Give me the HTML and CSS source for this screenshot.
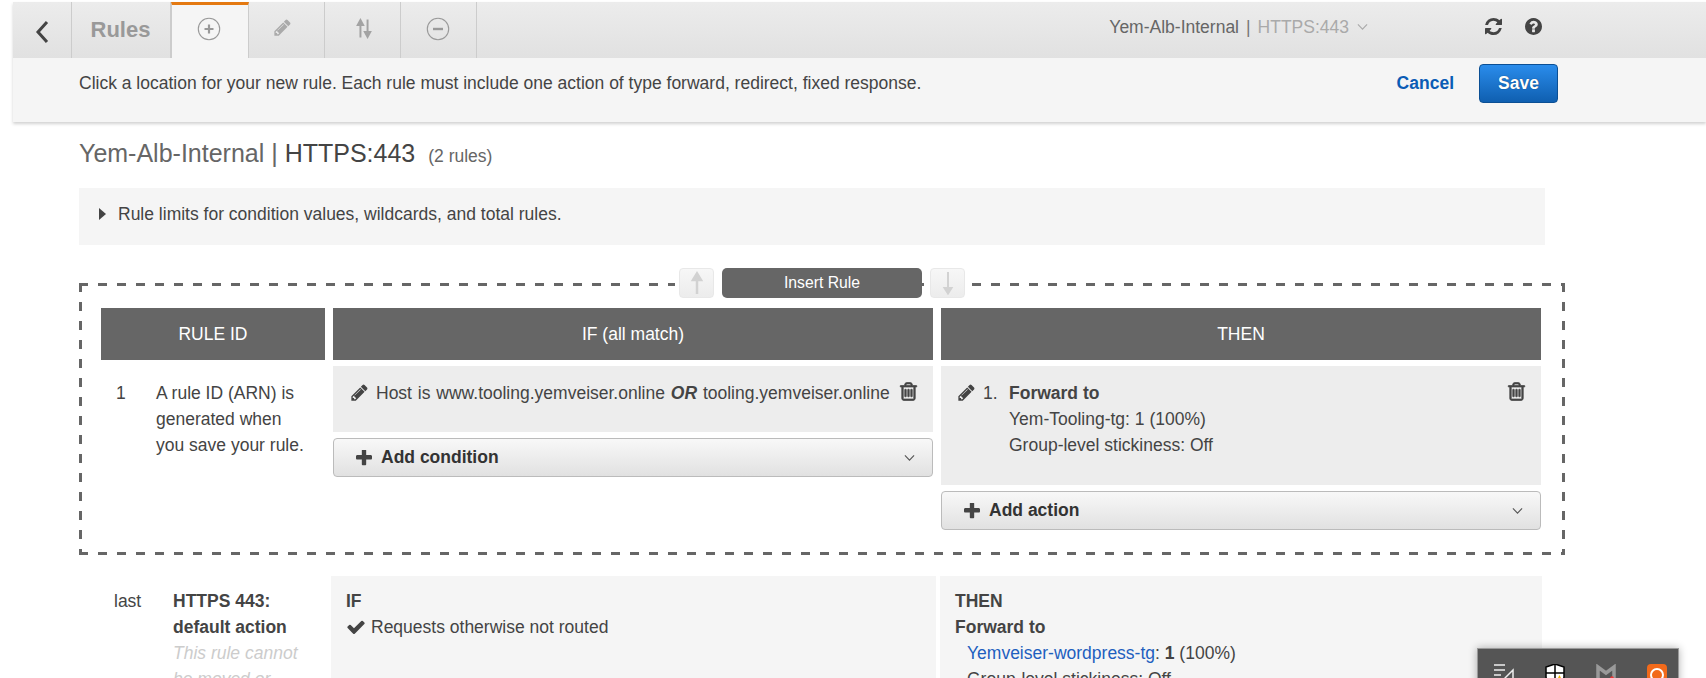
FILE: index.html
```html
<!DOCTYPE html>
<html lang="en">
<head>
<meta charset="utf-8">
<title>Rules</title>
<link rel="stylesheet" href="styles.css">
</head>
<body>
<svg class="defs" width="0" height="0" aria-hidden="true">
  <symbol id="i-pencil" viewBox="0 0 1792 1792"><path d="M491 1536l91-91-235-235-91 91v107h128v128h107zm523-928q0-22-22-22-10 0-17 7l-542 542q-7 7-7 17 0 22 22 22 10 0 17-7l542-542q7-7 7-17zm-54-192l416 416-832 832h-416v-416zm683 96q0 53-37 90l-166 166-416-416 166-165q36-38 90-38 53 0 91 38l235 234q37 39 37 91z"/></symbol>
  <symbol id="i-trash" viewBox="0 0 1792 1792"><path d="M704 736v576q0 14-9 23t-23 9h-64q-14 0-23-9t-9-23v-576q0-14 9-23t23-9h64q14 0 23 9t9 23zm256 0v576q0 14-9 23t-23 9h-64q-14 0-23-9t-9-23v-576q0-14 9-23t23-9h64q14 0 23 9t9 23zm256 0v576q0 14-9 23t-23 9h-64q-14 0-23-9t-9-23v-576q0-14 9-23t23-9h64q14 0 23 9t9 23zm128 724v-948h-896v948q0 22 7 40.5t14.5 27 10.5 8.5h832q3 0 10.5-8.5t14.5-27 7-40.5zm-672-1076h448l-48-117q-7-9-17-11h-317q-10 2-17 11zm928 32v64q0 14-9 23t-23 9h-96v948q0 83-47 143.5t-113 60.5h-832q-66 0-113-58.5t-47-141.5v-952h-96q-14 0-23-9t-9-23v-64q0-14 9-23t23-9h309l70-167q15-37 54-63t79-26h320q40 0 79 26t54 63l70 167h309q14 0 23 9t9 23z"/></symbol>
  <symbol id="i-plus" viewBox="192 192 1408 1408"><path d="M1600 736v192q0 40-28 68t-68 28h-416v416q0 40-28 68t-68 28h-192q-40 0-68-28t-28-68v-416h-416q-40 0-68-28t-28-68v-192q0-40 28-68t68-28h416v-416q0-40 28-68t68-28h192q40 0 68 28t28 68v416h416q40 0 68 28t28 68z"/></symbol>
  <symbol id="i-refresh" viewBox="128 128 1536 1536"><path d="M1639 1056q0 5-1 7-64 268-268 434.5t-478 166.5q-146 0-282.5-55t-243.5-157l-129 129q-19 19-45 19t-45-19-19-45v-448q0-26 19-45t45-19h448q26 0 45 19t19 45-19 45l-137 137q71 66 161 102t187 36q134 0 250-65t186-179q11-17 53-117 8-23 30-23h192q13 0 22.5 9.5t9.5 22.5zm25-800v448q0 26-19 45t-45 19h-448q-26 0-45-19t-19-45 19-45l138-138q-148-137-349-137-134 0-250 65t-186 179q-11 17-53 117-8 23-30 23h-199q-13 0-22.5-9.5t-9.5-22.5v-7q65-268 270-434.5t480-166.5q146 0 284 55.5t245 156.5l130-129q19-19 45-19t45 19 19 45z"/></symbol>
  <symbol id="i-help" viewBox="128 128 1536 1536"><path d="M1024 1376v-192q0-14-9-23t-23-9h-192q-14 0-23 9t-9 23v192q0 14 9 23t23 9h192q14 0 23-9t9-23zm256-672q0-88-55.5-163t-138.5-116-170-41q-243 0-371 213-15 24 8 42l132 100q7 6 19 6 16 0 25-12 53-68 86-92 34-24 86-24 48 0 85.5 26t37.5 59q0 38-20 61t-68 45q-63 28-115.5 86.5t-52.5 125.5v36q0 14 9 23t23 9h192q14 0 23-9t9-23q0-19 21.5-49.5t54.5-49.5q32-18 49-28.5t46-35 44.5-48 28-60.5 12.5-81zm384 192q0 209-103 385.5t-279.5 279.5-385.5 103-385.5-103-279.5-279.5-103-385.5 103-385.5 279.5-279.5 385.5-103 385.5 103 279.5 279.5 103 385.5z"/></symbol>
  <symbol id="i-check" viewBox="0 0 1792 1792"><path d="M1671 566q0 40-28 68l-724 724-136 136q-28 28-68 28t-68-28l-136-136-362-362q-28-28-28-68t28-68l136-136q28-28 68-28t68 28l294 295 656-657q28-28 68-28t68 28l136 136q28 28 28 68z"/></symbol>
  <symbol id="i-chev" viewBox="0 0 12 8"><path d="M1 1.200 6 6.400 11 1.200" fill="none" stroke="currentColor" stroke-width="1.200"/></symbol>
</svg>

<header class="console">
  <nav class="tabbar">
    <a class="tab tab-back">
      <svg class="back-icon" viewBox="0 0 14 24"><path d="M12 2 3 12l9 10" fill="none" stroke="currentColor" stroke-width="3"/></svg>
    </a>
    <a class="tab tab-title">Rules</a>
    <a class="tab tab-icon tab-active">
      <svg class="round-icon" viewBox="0 0 24 24"><circle cx="12" cy="12" r="10.700" fill="none" stroke="currentColor" stroke-width="1.100"/><path d="M12 7.500v9M7.500 12h9" stroke="currentColor" stroke-width="2.200"/></svg>
    </a>
    <a class="tab tab-icon">
      <svg class="edit-icon"><use href="#i-pencil"/></svg>
    </a>
    <a class="tab tab-icon">
      <svg class="sort-icon" viewBox="0 0 18 22"><path d="M5 21V6M2 7 5 1.500 8 7zM13 1v15M10 15 13 20.500 16 15z" stroke="currentColor" stroke-width="2.200" fill="currentColor"/></svg>
    </a>
    <a class="tab tab-icon tab-minus">
      <svg class="round-icon" viewBox="0 0 24 24"><circle cx="12" cy="12" r="10.700" fill="none" stroke="currentColor" stroke-width="1.100"/><path d="M7 12h10" stroke="currentColor" stroke-width="2.400"/></svg>
    </a>
    <div class="crumb">
      <span class="crumb-name">Yem-Alb-Internal</span>
      <span class="crumb-sep">|</span>
      <span class="crumb-port">HTTPS:443</span>
      <svg class="crumb-chev"><use href="#i-chev"/></svg>
    </div>
    <svg class="tool-icon"><use href="#i-refresh"/></svg>
    <svg class="tool-icon tool-help"><use href="#i-help"/></svg>
  </nav>
  <div class="notice">
    <p class="notice-text">Click a location for your new rule. Each rule must include one action of type forward, redirect, fixed response.</p>
    <a class="cancel">Cancel</a>
    <button class="save" type="button">Save</button>
  </div>
</header>

<main class="content">
  <h1 class="title"><span class="title-name">Yem-Alb-Internal |</span> HTTPS:443 <small class="title-count">(2 rules)</small></h1>

  <div class="limits"><span class="caret"></span>Rule limits for condition values, wildcards, and total rules.</div>

  <section class="new-rule">
    <div class="insert-bar">
      <button class="arrow" type="button"><svg viewBox="0 0 14 24"><path d="M7 23V7M3 9 7 2.500 11 9z" stroke="currentColor" stroke-width="2.500" fill="currentColor"/></svg></button>
      <button class="insert" type="button">Insert Rule</button>
      <button class="arrow" type="button"><svg viewBox="0 0 14 24"><path d="M7 1v16M3.500 17 7 22.500 10.500 17z" stroke="currentColor" stroke-width="2" fill="currentColor"/></svg></button>
    </div>
    <div class="rule-grid">
      <div class="col-head">RULE ID</div>
      <div class="col-head">IF (all match)</div>
      <div class="col-head">THEN</div>

      <div class="rule-id">
        <span class="rule-num">1</span>
        <span class="rule-note">A rule ID (ARN) is generated when you save your rule.</span>
      </div>

      <div class="rule-col">
        <div class="cond-card">
          <svg class="row-icon"><use href="#i-pencil"/></svg>
          <span class="cond-text">Host is www.tooling.yemveiser.online <b><i>OR</i></b> tooling.yemveiser.online</span>
          <svg class="trash"><use href="#i-trash"/></svg>
        </div>
        <button class="add-btn" type="button">
          <svg class="add-plus"><use href="#i-plus"/></svg>
          <span>Add condition</span>
          <svg class="add-chev"><use href="#i-chev"/></svg>
        </button>
      </div>

      <div class="rule-col">
        <div class="then-card">
          <svg class="row-icon"><use href="#i-pencil"/></svg>
          <span class="then-num">1.</span>
          <div class="then-body">
            <b>Forward to</b>
            <div>Yem-Tooling-tg: 1 (100%)</div>
            <div>Group-level stickiness: Off</div>
          </div>
          <svg class="trash"><use href="#i-trash"/></svg>
        </div>
        <button class="add-btn add-action" type="button">
          <svg class="add-plus"><use href="#i-plus"/></svg>
          <span>Add action</span>
          <svg class="add-chev"><use href="#i-chev"/></svg>
        </button>
      </div>
    </div>
  </section>

  <section class="default-rule">
    <div class="last-num">last</div>
    <div class="last-name">
      <b>HTTPS 443:<br>default action</b>
      <i class="last-hint">This rule cannot be moved or deleted</i>
    </div>
    <div class="last-card">
      <b>IF</b>
      <div class="last-cond"><svg class="check"><use href="#i-check"/></svg>Requests otherwise not routed</div>
    </div>
    <div class="last-card">
      <b>THEN</b>
      <div><b>Forward to</b></div>
      <div class="last-target"><a class="tg-link">Yemveiser-wordpress-tg</a>: <b>1</b> (100%)</div>
      <div class="last-target">Group-level stickiness: Off</div>
    </div>
  </section>
</main>

<aside class="tray">
  <svg class="tray-icon" viewBox="0 0 20 24"><path d="M0 1h11M0 6h11M0 11h7" stroke="#eee" stroke-width="1.500"/><path d="M11 14 19 6v18h-8z" fill="none" stroke="#eee" stroke-width="1.500"/></svg>
  <svg class="tray-icon" viewBox="0 0 20 24"><path d="M10 0 19 3v10c0 5-4 8-9 11-5-3-9-6-9-11V3z" fill="#fff" stroke="#000" stroke-width="1.500"/><path d="M10 0v24M1 9h18" stroke="#000" stroke-width="1.500"/><path d="M14.500 11 18 18h-7z" fill="#f5b800"/></svg>
  <svg class="tray-icon" viewBox="0 0 20 24"><path d="M2 22V3l8 6 8-6v19" fill="none" stroke="#999" stroke-width="3.500"/><circle cx="16" cy="14" r="1.800" fill="#e33"/></svg>
  <svg class="tray-icon" viewBox="0 0 20 24"><rect width="20" height="24" rx="4" fill="#f26a1b"/><circle cx="10" cy="11" r="6" fill="none" stroke="#fff" stroke-width="2"/></svg>
</aside>
</body>
</html>
```

FILE: styles.css
```css
* { box-sizing: border-box; }
html, body { margin: 0; height: 100%; overflow: hidden; }
body {
  background: #fff;
  color: #444;
  font-family: "Liberation Sans", Arial, sans-serif;
  font-size: 17.5px;
  line-height: 26px;
  padding-top: 2px;
}
.defs { position: absolute; }

.console {
  margin-left: 13px;
  background: #f5f5f5;
  box-shadow: 0 2px 3px rgba(0, 0, 0, .18);
}
.tabbar {
  display: flex;
  align-items: stretch;
  height: 56px;
  background: linear-gradient(#ececec, #e1e1e1);
  padding-right: 164px;
}
.tab {
  display: flex;
  align-items: center;
  justify-content: center;
  color: #999;
  border-right: 1px solid #ccc;
  margin-right: 4px;
}
.tab-back { width: 59px; color: #444; }
.tab-title { width: 95px; margin-right: 0; font-size: 22px; font-weight: 700; padding: 0 5px 0 0; }
.tab-icon { width: 72px; padding-bottom: 3px; }
.tab-active {
  width: 78px;
  background: #f5f5f5;
  border-top: 3px solid #e47911;
  border-left: 1px solid #ccc;
  padding: 0 2px 5px 0;
}
.tab-minus { padding-right: 6px; }
.back-icon { width: 14px; height: 24px; margin-top: 4px; }
.round-icon { width: 24px; height: 24px; }
.edit-icon { width: 19px; height: 19px; fill: #aaa; margin: 0 12px 2px 0; }
.sort-icon { width: 16px; height: 21px; color: #a3a3a3; margin-right: 2px; }

.crumb {
  margin-left: auto;
  margin-right: 117px;
  display: flex;
  align-items: center;
  gap: 7px;
  height: 50px;
  color: #666;
}
.crumb-sep { color: #777; }
.crumb-port { color: #aaa; }
.crumb-chev { width: 11px; height: 8px; color: #aaa; margin-left: 1px; }
.tool-icon { width: 17px; height: 17px; fill: #444; margin-top: 16px; }
.tool-help { margin-left: 23px; }

.notice {
  display: flex;
  align-items: flex-start;
  height: 64px;
  padding: 6px 148px 0 66px;
  line-height: 38px;
}
.notice-text { margin: 0 auto 0 0; }
.cancel { color: #0a5cb5; font-weight: 700; margin-right: 25px; }
.save {
  width: 79px;
  height: 39px;
  border: 1px solid #0b4f94;
  border-radius: 4px;
  background: linear-gradient(#2a8ceb, #0f5fb0);
  color: #fff;
  font: 700 17.5px "Liberation Sans", Arial, sans-serif;
  text-shadow: 0 0 1px #00305f;
}

.content { padding: 0 0 0 79px; }
.title {
  margin: 15px 0 0;
  font-size: 25px;
  font-weight: 400;
  line-height: 32px;
  color: #444;
}
.title-name { color: #666; }
.title-count { font-size: 17.5px; color: #666; margin-left: 6px; }

.limits {
  display: flex;
  align-items: center;
  width: 1466px;
  height: 57px;
  margin-top: 16px;
  padding: 0 0 6px 20px;
  background: #f5f5f5;
}
.caret {
  width: 0;
  height: 0;
  margin-right: 12px;
  border-left: 7px solid #444;
  border-top: 6px solid transparent;
  border-bottom: 6px solid transparent;
}

.new-rule {
  display: flow-root;
  width: 1486px;
  height: 272px;
  margin: 38px 0 0;
  padding: 0 23px 0 22px;
  background:
    repeating-linear-gradient(90deg, #666 0 9.500px, transparent 9.500px 19px) top left / 100% 3px no-repeat,
    repeating-linear-gradient(90deg, #666 0 9.500px, transparent 9.500px 19px) bottom left / 100% 3px no-repeat,
    repeating-linear-gradient(#666 0 9.500px, transparent 9.500px 19px) top left / 3px 100% no-repeat,
    repeating-linear-gradient(#666 0 9.500px, transparent 9.500px 19px) top right / 3px 100% no-repeat;
}
.insert-bar {
  display: flex;
  gap: 8px;
  margin: -15px 0 10px 578px;
  height: 30px;
}
.arrow {
  width: 35px;
  height: 30px;
  padding: 0;
  border: 1px solid #e8e8e8;
  border-radius: 4px;
  background: linear-gradient(#f7f7f7, #ececec);
  color: #d2d2d2;
  box-shadow: 0 0 0 4px #fff;
  display: flex;
  align-items: center;
  justify-content: center;
}
.arrow svg { width: 14px; height: 24px; }
.insert {
  width: 200px;
  height: 30px;
  padding: 0;
  border: 0;
  border-radius: 5px;
  background: #666;
  color: #fff;
  font: 15.75px "Liberation Sans", Arial, sans-serif;
}
.rule-grid {
  display: grid;
  grid-template-columns: 224px 600px 600px;
  grid-template-rows: 52px auto;
  column-gap: 8px;
  row-gap: 6px;
}
.col-head {
  display: flex;
  align-items: center;
  justify-content: center;
  background: #666;
  color: #fff;
}
.rule-id { display: flex; padding-top: 14px; }
.rule-num { width: 55px; padding-left: 15px; }
.rule-note { width: 152px; }
.rule-col { display: flex; flex-direction: column; gap: 6px; }
.cond-card {
  display: flex;
  height: 66px;
  padding: 14px 14px 0 17px;
  background: #ededed;
}
.row-icon { width: 19px; height: 19px; fill: #444; margin: 3px 7px 0 0; flex: none; }
.cond-text { white-space: nowrap; flex: 1; word-spacing: 1px; }
.trash { width: 21px; height: 21px; fill: #444; stroke: #444; stroke-width: 60; flex: none; margin-top: 1px; }
.add-btn {
  display: flex;
  align-items: center;
  height: 39px;
  padding: 0 17px 0 22px;
  border: 1px solid #bbb;
  border-radius: 4px;
  background: linear-gradient(#f8f8f8, #e1e1e1);
  color: #333;
  font: 700 17.5px "Liberation Sans", Arial, sans-serif;
}
.add-plus { width: 16px; height: 16px; fill: #444; margin-right: 9px; }
.add-chev { width: 11px; height: 8px; margin-left: auto; color: #555; }
.then-card {
  display: flex;
  height: 119px;
  padding: 14px 14px 0 16px;
  background: #ededed;
}
.then-num { width: 26px; }
.then-body { flex: 1; }

.default-rule {
  display: grid;
  grid-template-columns: 59px 158px 609px 602px;
  margin: 21px 0 0 35px;
  height: 200px;
}
.last-num, .last-name { padding-top: 12px; }
.last-name { width: 135px; }
.last-hint { display: block; color: #ccc; }
.last-card { padding: 12px 15px 0; background: #f5f5f5; margin-right: 4px; }
.last-card:last-child { margin-right: 0; }
.last-cond { display: flex; align-items: center; }
.check { width: 20px; height: 20px; fill: #444; margin-right: 5px; }
.last-target { padding-left: 12px; }
.tg-link { color: #1e5fbf; }

.tray {
  position: fixed;
  left: 1477px;
  top: 648px;
  width: 202px;
  height: 40px;
  display: flex;
  gap: 31px;
  padding: 15px 0 0 16px;
  background: #555;
  border: 1px solid #9a9a9a;
  box-shadow: 0 0 8px rgba(0, 0, 0, .3);
}
.tray-icon { width: 20px; height: 24px; flex: none; }
```
